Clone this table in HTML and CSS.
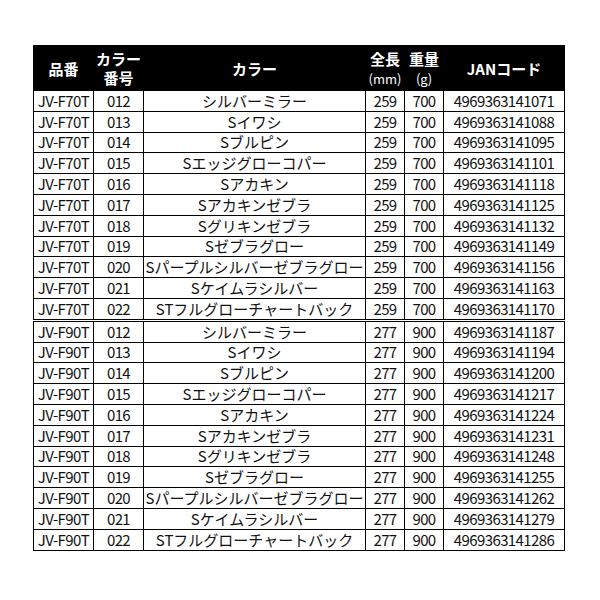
FILE: index.html
```html
<!DOCTYPE html>
<html lang="ja">
<head>
<meta charset="utf-8">
<link rel="stylesheet" href="styles.css">
</head>
<body>
<table class="spec">
<colgroup>
<col class="c1"><col class="c2"><col class="c3"><col class="c4"><col class="c5"><col class="c6">
</colgroup>
<thead>
<tr><th>品番</th><th>カラー<br>番号</th><th>カラー</th><th>全長<br><span class="unit">(mm)</span></th><th>重量<br><span class="unit">(g)</span></th><th>JANコード</th></tr>
</thead>
<tbody>
<tr><td class="n">JV-F70T</td><td class="n">012</td><td>シルバーミラー</td><td class="n">259</td><td class="n">700</td><td class="n">4969363141071</td></tr>
<tr><td class="n">JV-F70T</td><td class="n">013</td><td>Sイワシ</td><td class="n">259</td><td class="n">700</td><td class="n">4969363141088</td></tr>
<tr><td class="n">JV-F70T</td><td class="n">014</td><td>Sブルピン</td><td class="n">259</td><td class="n">700</td><td class="n">4969363141095</td></tr>
<tr><td class="n">JV-F70T</td><td class="n">015</td><td>Sエッジグローコパー</td><td class="n">259</td><td class="n">700</td><td class="n">4969363141101</td></tr>
<tr><td class="n">JV-F70T</td><td class="n">016</td><td>Sアカキン</td><td class="n">259</td><td class="n">700</td><td class="n">4969363141118</td></tr>
<tr><td class="n">JV-F70T</td><td class="n">017</td><td>Sアカキンゼブラ</td><td class="n">259</td><td class="n">700</td><td class="n">4969363141125</td></tr>
<tr><td class="n">JV-F70T</td><td class="n">018</td><td>Sグリキンゼブラ</td><td class="n">259</td><td class="n">700</td><td class="n">4969363141132</td></tr>
<tr><td class="n">JV-F70T</td><td class="n">019</td><td>Sゼブラグロー</td><td class="n">259</td><td class="n">700</td><td class="n">4969363141149</td></tr>
<tr><td class="n">JV-F70T</td><td class="n">020</td><td>Sパープルシルバーゼブラグロー</td><td class="n">259</td><td class="n">700</td><td class="n">4969363141156</td></tr>
<tr><td class="n">JV-F70T</td><td class="n">021</td><td>Sケイムラシルバー</td><td class="n">259</td><td class="n">700</td><td class="n">4969363141163</td></tr>
<tr class="last"><td class="n">JV-F70T</td><td class="n">022</td><td>STフルグローチャートバック</td><td class="n">259</td><td class="n">700</td><td class="n">4969363141170</td></tr>
<tr><td class="n">JV-F90T</td><td class="n">012</td><td>シルバーミラー</td><td class="n">277</td><td class="n">900</td><td class="n">4969363141187</td></tr>
<tr><td class="n">JV-F90T</td><td class="n">013</td><td>Sイワシ</td><td class="n">277</td><td class="n">900</td><td class="n">4969363141194</td></tr>
<tr><td class="n">JV-F90T</td><td class="n">014</td><td>Sブルピン</td><td class="n">277</td><td class="n">900</td><td class="n">4969363141200</td></tr>
<tr><td class="n">JV-F90T</td><td class="n">015</td><td>Sエッジグローコパー</td><td class="n">277</td><td class="n">900</td><td class="n">4969363141217</td></tr>
<tr><td class="n">JV-F90T</td><td class="n">016</td><td>Sアカキン</td><td class="n">277</td><td class="n">900</td><td class="n">4969363141224</td></tr>
<tr><td class="n">JV-F90T</td><td class="n">017</td><td>Sアカキンゼブラ</td><td class="n">277</td><td class="n">900</td><td class="n">4969363141231</td></tr>
<tr><td class="n">JV-F90T</td><td class="n">018</td><td>Sグリキンゼブラ</td><td class="n">277</td><td class="n">900</td><td class="n">4969363141248</td></tr>
<tr><td class="n">JV-F90T</td><td class="n">019</td><td>Sゼブラグロー</td><td class="n">277</td><td class="n">900</td><td class="n">4969363141255</td></tr>
<tr><td class="n">JV-F90T</td><td class="n">020</td><td>Sパープルシルバーゼブラグロー</td><td class="n">277</td><td class="n">900</td><td class="n">4969363141262</td></tr>
<tr><td class="n">JV-F90T</td><td class="n">021</td><td>Sケイムラシルバー</td><td class="n">277</td><td class="n">900</td><td class="n">4969363141279</td></tr>
<tr><td class="n">JV-F90T</td><td class="n">022</td><td>STフルグローチャートバック</td><td class="n">277</td><td class="n">900</td><td class="n">4969363141286</td></tr>
</tbody>
</table>
</body>
</html>
```

FILE: styles.css
```css
html, body {
  margin: 0;
  padding: 0;
  background: #ffffff;
}
body {
  padding: 45px 0 0 33px;
  font-family: "Noto Sans CJK JP", "Noto Sans", sans-serif;
  color: #111111;
}
.spec {
  border-collapse: collapse;
  table-layout: fixed;
  width: 531px;
}
.c1 { width: 60px; }
.c2 { width: 50px; }
.c3 { width: 222px; }
.c4 { width: 39px; }
.c5 { width: 39px; }
.c6 { width: 121px; }
.spec th {
  background: #000000;
  color: #ffffff;
  font-weight: bold;
  font-size: 15px;
  line-height: 19px;
  height: 44px;
  padding: 0;
  border: 1px solid #000000;
  text-align: center;
  vertical-align: middle;
}
.spec th .unit {
  font-size: 13px;
  font-weight: normal;
}
.spec td {
  font-size: 15px;
  line-height: 18px;
  height: 19.8px;
  padding: 0;
  border: 1px solid #000000;
  text-align: center;
  vertical-align: middle;
  white-space: nowrap;
  overflow: hidden;
}
.spec td.n {
  letter-spacing: -0.6px;
}
.spec tr.last td {
  border-bottom: 3px double #000000;
}
```
